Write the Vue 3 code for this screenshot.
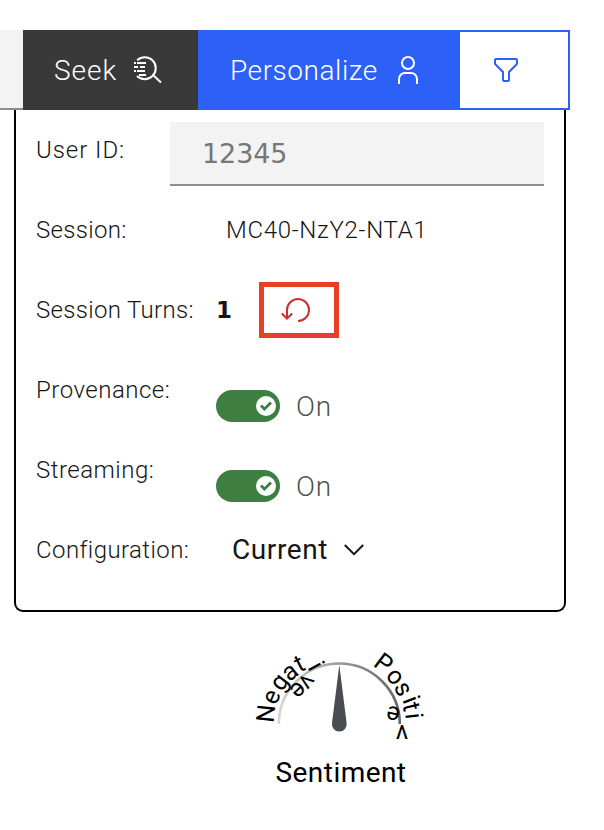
<script setup>
const settings = [
  { label: 'Provenance:', cls: 'l-prov' },
  { label: 'Streaming:', cls: 'l-stream' },
]
const letters = [
  { c: 'N', x: 266, y: 713.5, r: -84 },
  { c: 'e', x: 272.6, y: 697.3, r: -67 },
  { c: 'g', x: 280.5, y: 683, r: -52 },
  { c: 'a', x: 290.7, y: 673, r: -38 },
  { c: 't', x: 299.2, y: 663.3, r: -27 },
  { c: 'i', x: 314.5, y: 667, r: 62 },
  { c: 'v', x: 306, y: 681, r: 127 },
  { c: 'e', x: 297.5, y: 689.3, r: 137 },
  { c: 'P', x: 383.7, y: 663.3, r: 37 },
  { c: 'o', x: 394.3, y: 677.3, r: 50 },
  { c: 's', x: 402, y: 689.3, r: 62 },
  { c: 'i', x: 409.5, y: 700.3, r: 69 },
  { c: 't', x: 411.5, y: 706.7, r: 76 },
  { c: 'i', x: 412, y: 716, r: 84 },
  { c: 'v', x: 402, y: 731, r: 180 },
  { c: 'e', x: 393.3, y: 713.3, r: 192 },
]
</script>

<template>
  <main class="page">
    <header class="bar">
      <div class="stub"></div>
      <button class="seek"><span>Seek</span>
        <svg width="32" height="32" viewBox="0 0 32 32" fill="none" stroke="#fff" stroke-width="2">
          <path d="M5.2 6.2A11 11 0 1 1 5 22" />
          <path d="M20.5 20.5 29 28.5M5 9h9M8 13h5M5 17h8M7 21h7M2 9h2M2 13h4M2 17h2" />
        </svg>
      </button>
      <button class="personalize"><span>Personalize</span>
        <svg width="32" height="32" viewBox="0 0 32 32" fill="#fff">
          <path d="M16 4a5 5 0 1 1-5 5 5 5 0 0 1 5-5m0-2a7 7 0 1 0 7 7A7 7 0 0 0 16 2ZM26 30h-2v-5a5 5 0 0 0-5-5h-6a5 5 0 0 0-5 5v5H6v-5a7 7 0 0 1 7-7h6a7 7 0 0 1 7 7Z" />
        </svg>
      </button>
      <button class="filter">
        <svg width="32" height="32" viewBox="0 0 32 32" fill="#2d60f6">
          <path d="M18 28h-4a2 2 0 0 1-2-2v-7.59L4.59 11A2 2 0 0 1 4 9.59V6a2 2 0 0 1 2-2h20a2 2 0 0 1 2 2v3.59a2 2 0 0 1-.59 1.41L20 18.41V26a2 2 0 0 1-2 2ZM6 6v3.59l8 8V26h4v-8.41l8-8V6Z" />
        </svg>
      </button>
    </header>
    <section class="panel">
      <div class="row first"><span class="label l-user">User ID:</span><div class="field"><span>12345</span></div></div>
      <div class="row"><span class="label l-session">Session:</span><span class="session">MC40-NzY2-NTA1</span></div>
      <div class="row">
        <span class="label l-turns">Session Turns:</span><b class="count">1</b>
        <button class="reset">
          <svg width="32" height="32" viewBox="0 0 32 32" fill="none" stroke="#c9302f" stroke-width="2">
            <path d="M18 27A11 11 0 1 0 7 16v8.3M1.8 19.5 7 24.7l5.2-5.2" />
          </svg>
        </button>
      </div>
      <div v-for="s in settings" :key="s.label" class="row">
        <span class="label" :class="s.cls">{{ s.label }}</span>
        <div class="switch">
          <span class="track"><span class="knob">
            <svg width="12" height="10" viewBox="0 0 12 10" fill="none" stroke="#3e7e41" stroke-width="2.8"><path d="M1 4.6 4.4 8 11 1.6" /></svg>
          </span></span>
          <span class="on">On</span>
        </div>
      </div>
      <div class="row">
        <span class="label l-config">Configuration:</span>
        <span class="current">Current</span>
        <svg class="chev" width="20" height="12" viewBox="0 0 20 12" fill="none" stroke="#161616" stroke-width="2"><path d="M.8 1 10 10.2 19.2 1" /></svg>
      </div>
    </section>
    <figure class="gauge">
      <svg width="200" height="108" viewBox="240 644 200 108">
        <defs>
          <linearGradient id="arc" x1="0" x2="1"><stop offset="0" stop-color="#d6d6d6" /><stop offset=".5" stop-color="#999" /><stop offset="1" stop-color="#666" /></linearGradient>
        </defs>
        <path d="M278.8 724A60.5 60.5 0 0 1 399.8 724" fill="none" stroke="url(#arc)" stroke-width="2.6" />
        <path d="M339.3 665 332 723a7.4 7.4 0 1 0 14.6 0Z" fill="#484c51" />
        <text v-for="(l, i) in letters" :key="i" text-anchor="middle" :transform="`translate(${l.x} ${l.y}) rotate(${l.r})`" :y="/[NtP]/.test(l.c) ? 8.5 : 6.5">{{ l.c }}</text>
      </svg>
      <figcaption>Sentiment</figcaption>
    </figure>
  </main>
</template>

<style>
body { margin: 0; background: #fff; }
</style>
<style scoped>
* { box-sizing: border-box; }
.page { width: 604px; height: 830px; padding-top: 30px; overflow: hidden; font-family: Roboto, "Noto Sans", sans-serif; color: #161616; }
button { font: inherit; margin: 0; padding: 0; border: 0; border-radius: 0; background: none; }
svg { display: block; flex: none; }
.bar { display: flex; width: 570px; height: 80px; }
.stub { width: 23px; background: #f3f3f3; border-bottom: 2px solid #8d8d8d; }
.seek, .personalize { display: flex; align-items: center; color: #fff; font-size: 28px; font-weight: 350; }
.seek { width: 175px; padding-left: 31px; background: #393939; }
.seek span { width: 78px; text-align: left; letter-spacing: .95px; }
.personalize { width: 262px; padding-left: 32px; background: #2d60f6; }
.personalize span { width: 162px; text-align: left; letter-spacing: .55px; }
.filter { width: 110px; padding-left: 30px; border: 2px solid #2d60f6; border-left: 0; }
.panel { width: 552px; height: 502px; margin-left: 14px; border: 2px solid #000; border-top: 0; border-radius: 0 0 9px 9px; padding-left: 20px; }
.row { display: flex; height: 80px; align-items: center; }
.label { width: 180px; flex: none; font-size: 24px; font-weight: 300; white-space: nowrap; letter-spacing: .5px; }
.first .label { width: 134px; }
.l-user { letter-spacing: .95px; }
.l-session, .l-turns { letter-spacing: .33px; }
.l-config { letter-spacing: .42px; }
.field { width: 374px; height: 64px; margin-top: 8px; background: #f3f3f3; border-bottom: 2px solid #8d8d8d; padding: 16px 0 0 32px; font-family: "DejaVu Sans", sans-serif; font-size: 27px; line-height: 32px; color: #777; letter-spacing: -.1px; }
.session { padding-left: 10px; font-size: 24px; font-weight: 300; letter-spacing: .7px; }
.count { font-family: "DejaVu Sans", sans-serif; font-size: 23px; font-weight: 700; width: 43px; }
.reset { width: 80px; height: 56px; border: 5px solid #e93e26; padding-left: 16px; }
.switch { display: flex; align-items: center; padding-top: 32px; }
.track { display: flex; align-items: center; justify-content: flex-end; width: 64px; height: 32px; border-radius: 16px; padding-right: 4px; background: #3e7e41; }
.knob { display: grid; place-items: center; width: 20px; height: 20px; border-radius: 50%; background: #fff; }
.on { margin-left: 16px; font-size: 28px; font-weight: 350; color: #525252; letter-spacing: .8px; }
.current { width: 128px; padding: 0 0 2px 16px; font-size: 28px; letter-spacing: .6px; }
.gauge { width: 200px; margin: 32px 0 0 240px; }
.gauge text { font-size: 25px; fill: #000; }
figcaption { text-align: center; font-size: 28px; line-height: 36px; color: #000; padding: 3px 0 0 2px; letter-spacing: .45px; }
</style>
